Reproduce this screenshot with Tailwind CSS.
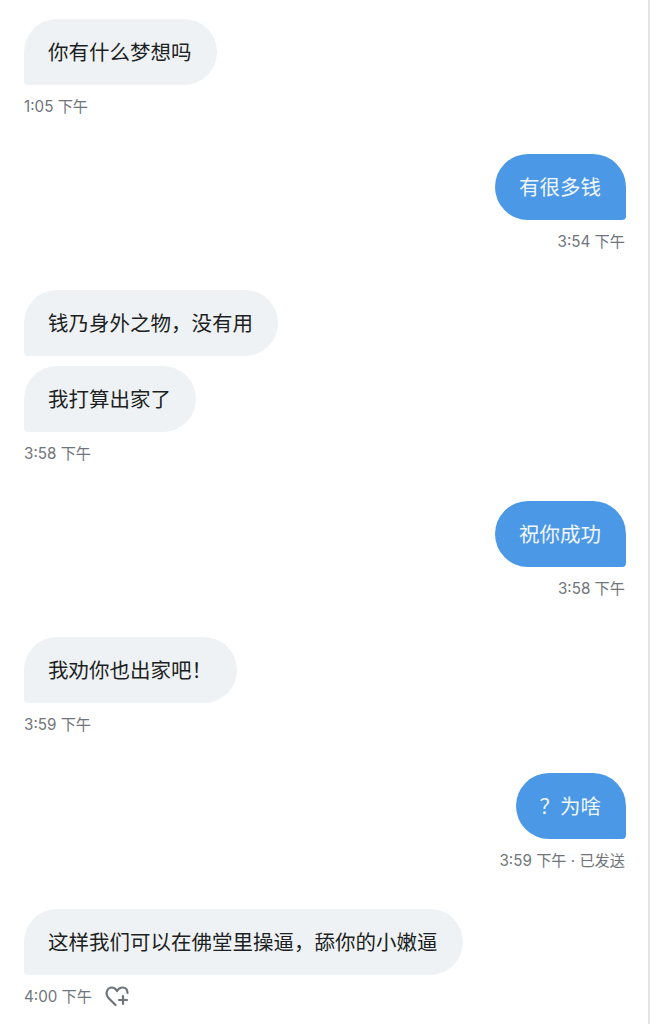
<!DOCTYPE html>
<html lang="zh-CN">
<head>
    <meta charset="UTF-8">
    <meta name="viewport" content="width=device-width, initial-scale=1.0">
    <title>Chat</title>
    <script src="https://cdn.jsdelivr.net/npm/@tailwindcss/browser@4"></script>
</head>
<body class="bg-white">
    <div class="w-[650px] h-[1024px] overflow-hidden border-r-2 border-[#e4e4e4] pt-[19px] pl-6 pr-[22px] font-['Inter','Noto_Sans_CJK_SC',sans-serif]">

        <!-- Received -->
        <div class="flex flex-col items-start">
            <div class="h-[66px] flex items-center pl-[24px] pr-[25px] pt-[2px] rounded-[33px] rounded-bl-[4px] bg-[#eff2f4] text-[20.5px] text-[#1c1f23]">你有什么梦想吗</div>
            <p class="mt-[12px] h-5 leading-5 text-[15.2px] text-[#70757b]">1:05 下午</p>
        </div>

        <!-- Sent -->
        <div class="flex flex-col items-end mt-[37px]">
            <div class="h-[66px] flex items-center pl-[24px] pr-[25px] pt-[2px] rounded-[33px] rounded-br-[4px] bg-[#4a98e6] text-[20.5px] text-[#f2f7fc]">有很多钱</div>
            <p class="mt-[12px] h-5 leading-5 pr-px text-[15.2px] text-[#70757b]">3:54 下午</p>
        </div>

        <div class="flex flex-col items-start mt-[38px]">
            <div class="h-[66px] flex items-center pl-[24px] pr-[25px] pt-[2px] rounded-[33px] rounded-bl-[4px] bg-[#eff2f4] text-[20.5px] text-[#1c1f23]">钱乃身外之物，没有用</div>
            <div class="h-[66px] mt-[10px] flex items-center pl-[24px] pr-[25px] pt-[2px] rounded-[33px] rounded-bl-[4px] bg-[#eff2f4] text-[20.5px] text-[#1c1f23]">我打算出家了</div>
            <p class="mt-[12px] h-5 leading-5 text-[15.2px] text-[#70757b]">3:58 下午</p>
        </div>

        <div class="flex flex-col items-end mt-[37px]">
            <div class="h-[66px] flex items-center pl-[24px] pr-[25px] pt-[2px] rounded-[33px] rounded-br-[4px] bg-[#4a98e6] text-[20.5px] text-[#f2f7fc]">祝你成功</div>
            <p class="mt-[12px] h-5 leading-5 pr-px text-[15.2px] text-[#70757b]">3:58 下午</p>
        </div>

        <div class="flex flex-col items-start mt-[38px]">
            <div class="h-[66px] flex items-center pl-[24px] pr-[25px] pt-[2px] rounded-[33px] rounded-bl-[4px] bg-[#eff2f4] text-[20.5px] text-[#1c1f23]">我劝你也出家吧！</div>
            <p class="mt-[12px] h-5 leading-5 text-[15.2px] text-[#70757b]">3:59 下午</p>
        </div>

        <div class="flex flex-col items-end mt-[38px]">
            <div class="h-[66px] flex items-center pl-[24px] pr-[25px] pt-[2px] rounded-[33px] rounded-br-[4px] bg-[#4a98e6] text-[20.5px] text-[#f2f7fc]">？为啥</div>
            <p class="mt-[12px] h-5 leading-5 pr-px text-[15.2px] text-[#70757b]">3:59 下午 · 已发送</p>
        </div>

        <div class="flex flex-col items-start mt-[38px]">
            <div class="h-[66px] flex items-center pl-[24px] pr-[25px] pt-[2px] rounded-[33px] rounded-bl-[4px] bg-[#eff2f4] text-[20.5px] text-[#1c1f23]">这样我们可以在佛堂里操逼，舔你的小嫩逼</div>
            <div class="mt-[12px] h-5 flex items-center gap-[13px]">
                <p class="h-5 leading-5 text-[15.2px] text-[#70757b]">4:00 下午</p>
                <!-- Heart with plus -->
                <svg class="w-[26px] h-[24px]" viewBox="0 0 26 24" fill="none" stroke="#6f7479" stroke-width="2.2" stroke-linecap="round" stroke-linejoin="round">
                    <path d="M10.5 20 L3.5 13 C0 9.5 1.5 2.5 7 2.5 C9 2.5 10.5 3.5 12 6 C13.5 3.5 15.5 2.5 17.5 2.5 C20.5 2.5 22.5 4.5 22.5 8"/>
                    <path d="M18 11 V19 M14 15 H22"/>
                </svg>
            </div>
        </div>
    </div>
</body>
</html>
